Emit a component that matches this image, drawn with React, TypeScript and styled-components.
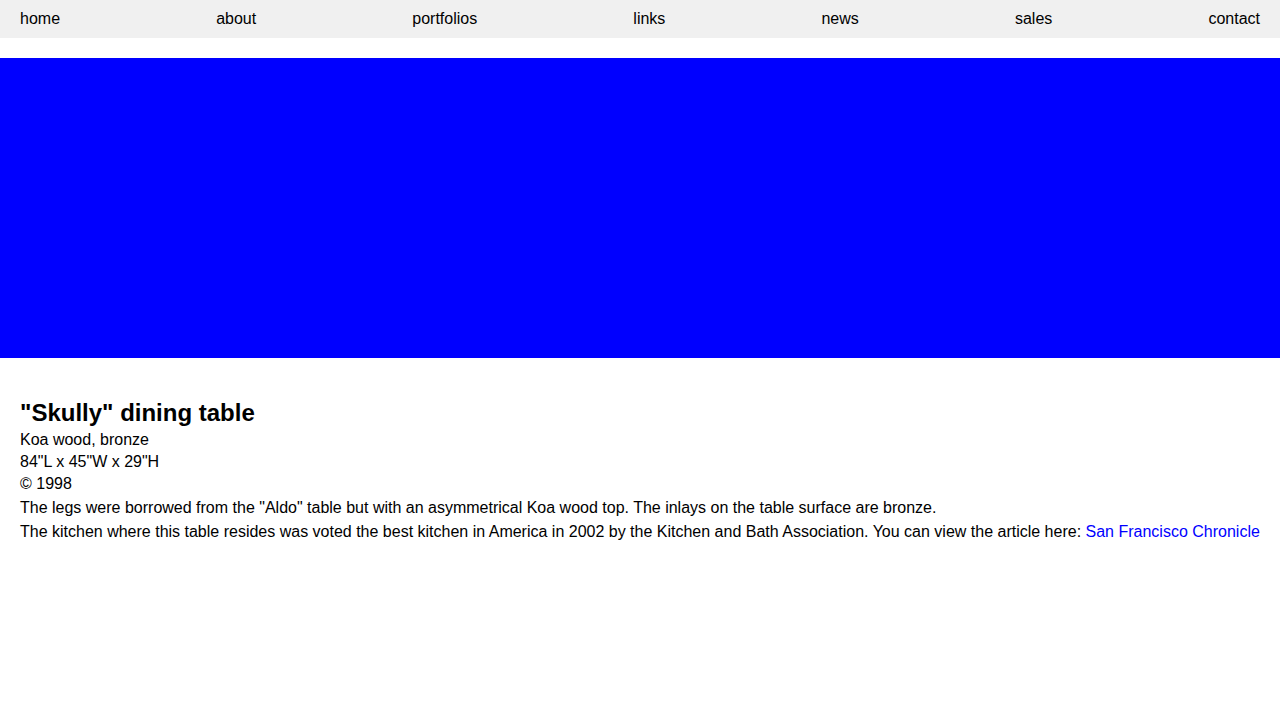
import React from "react";
import styled, { createGlobalStyle } from "styled-components";

const Global = createGlobalStyle`
  html, body { margin: 0; padding: 0; background: #fff; }
  body { font-family: "Liberation Sans", Arial, sans-serif; color: #000; }
`;

const Nav = styled.nav`
  display: flex;
  justify-content: space-between;
  align-items: center;
  height: 38px;
  padding: 0 20px;
  background: #f0f0f0;
  font-size: 16px;
`;

const NavLink = styled.a`
  color: #000;
  text-decoration: none;
`;

const Banner = styled.div`
  margin-top: 20px;
  height: 300px;
  background: #0000ff;
`;

const Content = styled.section`
  padding: 38px 20px 40px;
  font-size: 16px;
  line-height: 22px;
`;

const Title = styled.h2`
  margin: 0;
  font-size: 24px;
  line-height: 33px;
  font-weight: bold;
`;

const Line = styled.div<{ $gap?: number }>`
  margin-top: ${(p) => p.$gap ?? 0}px;
`;

const Link = styled.a`
  color: #0000ff;
  text-decoration: none;
`;

const items = ["home", "about", "portfolios", "links", "news", "sales", "contact"];

export default function App() {
  return (
    <>
      <Global />
      <Nav>
        {items.map((i) => (
          <NavLink key={i} href="#">{i}</NavLink>
        ))}
      </Nav>
      <Banner />
      <Content>
        <Title>"Skully" dining table</Title>
        <Line>Koa wood, bronze</Line>
        <Line>84"L x 45"W x 29"H</Line>
        <Line>© 1998</Line>
        <Line $gap={2}>
          The legs were borrowed from the "Aldo" table but with an asymmetrical Koa wood top. The inlays on the table surface are bronze.
        </Line>
        <Line $gap={2}>
          The kitchen where this table resides was voted the best kitchen in America in 2002 by the Kitchen and Bath Association. You can view the article here:{" "}
          <Link href="#">San Francisco Chronicle</Link>
        </Line>
      </Content>
    </>
  );
}
